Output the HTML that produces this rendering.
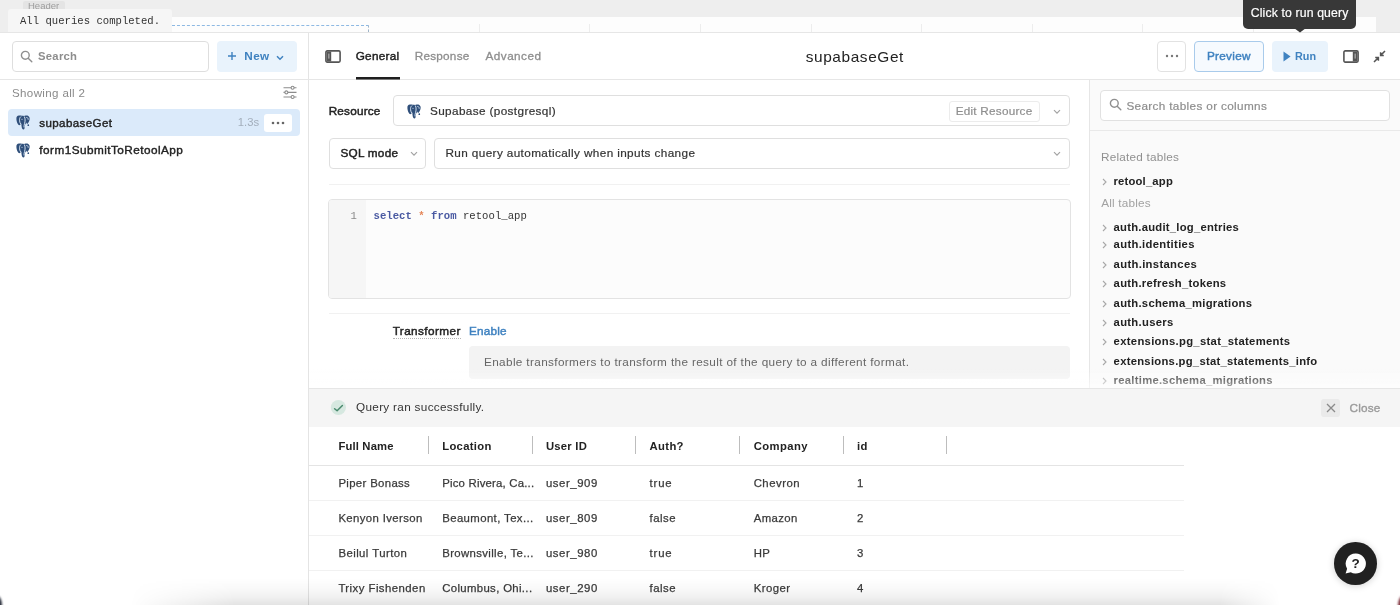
<!DOCTYPE html>
<html lang="en">
<head>
<meta charset="utf-8">
<title>supabaseGet - Query editor</title>
<style>
*{box-sizing:border-box;margin:0;padding:0}
html,body{width:1400px;height:605px;overflow:hidden;background:#fff}
body{font-family:"Liberation Sans",Arial,sans-serif;font-size:12px;color:#2b2b2b;position:relative}
#app{position:absolute;left:0;top:0;width:1400px;height:605px;overflow:hidden;background:transparent;will-change:transform}
.a{position:absolute}
.t{position:absolute;white-space:nowrap;line-height:16px;height:16px}
.mono{font-family:"Liberation Mono","DejaVu Sans Mono",monospace}
.g{color:#8c8c8c}
.b{font-weight:bold}
.blue{color:#3f82c0}
.box{position:absolute;border:1px solid #e2e2e2;border-radius:4px;background:#fff}
.hl{position:absolute;height:1px;background:#e6e6e6}
.vl{position:absolute;width:1px;background:#e6e6e6}
</style>
</head>
<body>
<div id="app">

<!-- ===== top canvas strip ===== -->
<div class="a" id="topgray" style="left:0;top:0;width:1400px;height:33px;background:#eeeeee"></div>
<div class="a" id="topwhite" style="left:8px;top:17px;width:1368px;height:15px;background:#fdfdfd"></div>
<div class="a" id="hdrtag" style="left:23px;top:1px;width:42px;height:10px;background:#e4e4e4;border-radius:2px"></div>
<div class="a" style="left:23px;top:3px;width:42px;height:8px;overflow:hidden"><div class="t g" id="hdrtxt" style="left:5px;top:-3px;font-size:9.500px;line-height:12px;height:12px;color:#9d9d9d">Header</div></div>
<div class="a" id="qtab" style="left:8px;top:9px;width:164px;height:23px;background:#f6f6f6;border-radius:3px 3px 0 0"></div>
<div class="t mono" id="qtabtxt" style="left:20.0px;top:13px;font-size:10.6px;color:#333;letter-spacing:0.01px">All queries completed.</div>
<div class="a" id="dash" style="left:172px;top:25px;width:197px;height:7px;border-top:1px dashed #8db9e3;border-right:1px dashed #9fb4c8"></div>
<div class="vl" style="left:479px;top:24px;height:8px;background:#ededed"></div><div class="vl" style="left:589px;top:24px;height:8px;background:#ededed"></div><div class="vl" style="left:700px;top:24px;height:8px;background:#ededed"></div><div class="vl" style="left:811px;top:24px;height:8px;background:#ededed"></div><div class="vl" style="left:921px;top:24px;height:8px;background:#ededed"></div><div class="vl" style="left:1032px;top:24px;height:8px;background:#ededed"></div><div class="vl" style="left:1142px;top:24px;height:8px;background:#ededed"></div><div class="vl" style="left:1253px;top:24px;height:8px;background:#ededed"></div>
<div class="hl" style="left:0;top:32px;width:1400px;background:#e6e6e6"></div>

<!-- ===== left panel ===== -->
<div class="vl" style="left:308px;top:33px;height:572px;background:#e4e4e4"></div>
<div class="hl" style="left:0;top:79px;width:1400px"></div>


<!-- ===== center header ===== -->
<svg class="a" id="sideico" style="left:325px;top:50px" width="16" height="13" viewBox="0 0 16 13"><rect x="0.9" y="0.9" width="14.2" height="11.2" rx="1.3" fill="#fff" stroke="#555" stroke-width="1.6"/><rect x="1.6" y="1.6" width="4.6" height="9.8" fill="#555"/><rect x="3" y="3.6" width="1.6" height="5" fill="#999"/></svg>
<div class="t" id="tgen" style="left:355.7px;top:48px;font-size:11.75px;color:#1f1f1f;-webkit-text-stroke:.45px #1f1f1f;letter-spacing:0.28px">General</div>
<div class="t" id="tres" style="left:414.7px;top:48px;font-size:11.75px;color:#8e8e8e;-webkit-text-stroke:.3px #8e8e8e;letter-spacing:0.24px">Response</div>
<div class="t" id="tadv" style="left:485.5px;top:48px;font-size:11.75px;color:#8e8e8e;-webkit-text-stroke:.3px #8e8e8e;letter-spacing:0.46px">Advanced</div>
<div class="a" style="left:356px;top:77px;width:44px;height:3px;background:linear-gradient(#1f1f1f 0,#1f1f1f 2px,#7a7a7a 2px)"></div>
<div class="t" id="title" style="left:805.7px;top:46px;font-size:15.42px;line-height:22px;height:22px;color:#222;letter-spacing:0.60px">supabaseGet</div>

<div class="box" style="left:1157px;top:41px;width:29px;height:31px"></div>
<svg class="a" style="left:1165px;top:54px" width="14" height="4" viewBox="0 0 14 4" fill="#777"><circle cx="2" cy="2" r="1.2"/><circle cx="7" cy="2" r="1.2"/><circle cx="12" cy="2" r="1.2"/></svg>
<div class="box" style="left:1194px;top:41px;width:70px;height:31px;border-color:#a9cbeb;background:#f6fafe"></div>
<div class="t blue" id="prev" style="left:1207.0px;top:48px;font-size:11.75px;-webkit-text-stroke:.45px #3f82c0;letter-spacing:0.28px">Preview</div>
<div class="a" style="left:1272px;top:41px;width:56px;height:31px;border-radius:4px;background:#e9f3fc"></div>
<svg class="a" style="left:1283px;top:51px" width="8" height="11" viewBox="0 0 8 11" fill="#3f82c0"><path d="M0.5 0.6L7.6 5.5L0.5 10.4z"/></svg>
<div class="t blue b" id="runt" style="left:1295.0px;top:48px;font-size:10.81px;">Run</div>
<svg class="a" id="panico" style="left:1343px;top:50px" width="16" height="13" viewBox="0 0 16 13"><rect x="0.9" y="0.9" width="14.2" height="11.2" rx="1.3" fill="#fff" stroke="#555" stroke-width="1.6"/><rect x="9.8" y="1.6" width="4.6" height="9.8" fill="#555"/><rect x="11.4" y="3.6" width="1.6" height="5" fill="#999"/></svg>
<svg class="a" id="colico" style="left:1373px;top:50px" width="13" height="13" viewBox="0 0 13 13" fill="none" stroke="#555" stroke-width="1.5"><path d="M12 1L7.6 5.4M7.6 2.2v3.2h3.2M1 12l4.4-4.4M5.4 10.8V7.6H2.2"/></svg>

<!-- tooltip -->
<div class="a" style="left:1243px;top:-4px;width:113px;height:33px;border-radius:5px;background:#383838"></div>
<svg class="a" style="left:1294px;top:28px" width="12" height="5" viewBox="0 0 12 5" fill="#383838"><path d="M0 0h12L6 4.6z"/></svg>
<div class="t" id="tip" style="left:1250.7px;top:5px;font-size:12.22px;color:#fff;-webkit-text-stroke:.2px #fff;letter-spacing:0.15px">Click to run query</div>


<!-- ===== center body ===== -->
<div class="t" id="reslab" style="left:328.7px;top:103px;font-size:11.75px;color:#222;-webkit-text-stroke:.45px #222;letter-spacing:0.20px">Resource</div>
<div class="box" style="left:393px;top:95px;width:677px;height:31px;border-color:#dfdfdf"></div>
<svg class="a" style="left:407px;top:104px" width="14" height="15" viewBox="0 0 14 15"><path fill="#2f4f7a" d="M3 .6C1.200.6.200 2 .4 4.200c.2 2.200 1 4.400 2 5.600.6.700 1.500.6 2.100-.2l.8-1c.1 1.900.3 4 1 5.200.6 1 1.900.900 2.200-.3L9 9.800c.5-.8 1-1.800 1.200-2.400.4 1.200 1 1.800 1.700 1.200 1.500-2.200 2.100-4.400 1.600-6C13 1 11.400.4 9.800.6 9 .7 8.400.9 8 1.100 7.300.8 6.400.7 5.700.8 4.900.5 3.800.5 3 .6z"/><circle cx="12.300" cy="10.200" r=".85" fill="#2f4f7a"/><path d="M4.700 1.800C3.600 2.600 3.400 4.200 3.600 5.800c.2 1.500.6 2.600 1 3.200M8.500 1.900c.9 1.600.7 4.500.1 6.500-.4 1.200-.6 2.600-.6 3.600" stroke="#dce9f7" stroke-width=".95" fill="none" stroke-linecap="round"/><path d="M10.600 2.400c1.100 0 1.700.8 1.600 2" stroke="#dce9f7" stroke-width=".8" fill="none" stroke-linecap="round"/><circle cx="6" cy="4.300" r=".55" fill="#dce9f7"/></svg>
<div class="t" id="supa" style="left:430.0px;top:103px;font-size:11.75px;color:#333;-webkit-text-stroke:.2px #333;letter-spacing:0.37px">Supabase (postgresql)</div>
<div class="a" style="left:949px;top:101px;width:91px;height:21px;border:1px solid #ececec;border-radius:3px;background:#fff"></div>
<div class="t" id="editres" style="left:955.7px;top:103px;font-size:11.75px;color:#8e8e8e;-webkit-text-stroke:.2px #8e8e8e;letter-spacing:0.23px">Edit Resource</div>
<svg class="a" style="left:1053px;top:109px" width="8" height="6" viewBox="0 0 8 6" stroke="#a3a3a3" stroke-width="1.2" fill="none"><path d="M1 1.200L4 4.200L7 1.200"/></svg>

<div class="box" style="left:329px;top:138px;width:97px;height:31px;border-color:#dfdfdf"></div>
<div class="t" id="sqlm" style="left:340.4px;top:145px;font-size:11.75px;color:#222;-webkit-text-stroke:.45px #222;letter-spacing:0.27px">SQL mode</div>
<svg class="a" style="left:410px;top:151px" width="8" height="6" viewBox="0 0 8 6" stroke="#a3a3a3" stroke-width="1.2" fill="none"><path d="M1 1.200L4 4.200L7 1.200"/></svg>
<div class="box" style="left:434px;top:138px;width:636px;height:31px;border-color:#dfdfdf"></div>
<div class="t" id="runq" style="left:445.5px;top:145px;font-size:11.75px;color:#333;-webkit-text-stroke:.2px #333;letter-spacing:0.38px">Run query automatically when inputs change</div>
<svg class="a" style="left:1053px;top:151px" width="8" height="6" viewBox="0 0 8 6" stroke="#a3a3a3" stroke-width="1.2" fill="none"><path d="M1 1.200L4 4.200L7 1.200"/></svg>

<div class="hl" style="left:329px;top:184px;width:741px;background:#f1f1f1"></div>

<!-- code editor -->
<div class="a" style="left:328px;top:199px;width:743px;height:100px;border:1px solid #e3e3e3;border-radius:4px;background:#fcfcfc;overflow:hidden"><div class="a" style="left:0;top:0;width:37px;height:100px;background:#f6f6f6"></div></div>
<div class="t mono" id="ln1" style="left:350.5px;top:208px;font-size:10.6px;color:#8a8a8a">1</div>
<div class="t mono" id="code" style="left:373.5px;top:208px;font-size:10.6px;color:#333;letter-spacing:0.03px"><span style="color:#4a5aa2;font-weight:bold">select</span> <span style="color:#e5875a;font-weight:bold">*</span> <span style="color:#4a5aa2;font-weight:bold">from</span> retool_app</div>

<div class="hl" style="left:329px;top:313px;width:741px;background:#f1f1f1"></div>
<div class="t" id="transf" style="left:392.7px;top:323px;font-size:11.75px;color:#222;-webkit-text-stroke:.45px #222;letter-spacing:0.41px">Transformer</div>
<div class="a" style="left:393px;top:338px;width:68px;height:1px;border-top:1px dotted #b5b5b5"></div>
<div class="t blue" id="enab" style="left:468.9px;top:323px;font-size:11.75px;-webkit-text-stroke:.45px #3f82c0;letter-spacing:0.22px">Enable</div>
<div class="a" style="left:469px;top:346px;width:601px;height:33px;border-radius:4px;background:#f3f3f3"></div>
<div class="t" id="entr" style="left:484.0px;top:354px;font-size:11.75px;color:#666;letter-spacing:0.36px">Enable transformers to transform the result of the query to a different format.</div>


<!-- ===== right schema panel ===== -->
<div class="a" style="left:1089px;top:80px;width:311px;height:308px;background:#fafafa;border-left:1px solid #e6e6e6"></div>
<div class="box" style="left:1100px;top:90px;width:290px;height:31px;border-color:#e1e1e1"></div>
<svg class="a" style="left:1109px;top:98px" width="13" height="13" viewBox="0 0 13 13" fill="none" stroke="#8f8f8f" stroke-width="1.400"><circle cx="5.300" cy="5.300" r="3.900"/><path d="M8.200 8.200L11.800 11.800" stroke-linecap="round"/></svg>
<div class="t" id="srt" style="left:1126.4px;top:98px;font-size:11.75px;color:#8e8e8e;-webkit-text-stroke:.2px #8e8e8e;letter-spacing:0.34px">Search tables or columns</div>
<div class="hl" style="left:1090px;top:130px;width:310px;background:#e9e9e9"></div>
<div class="t" id="relt" style="left:1101.0px;top:149px;font-size:11.75px;color:#909090;letter-spacing:0.22px">Related tables</div>
<div class="t" id="allt" style="left:1101.2px;top:195px;font-size:11.75px;color:#a2a2a2;letter-spacing:0.19px">All tables</div>
<svg class="a" style="left:1102px;top:177.5px" width="5" height="8" viewBox="0 0 5 8" fill="none" stroke="#a8a8a8" stroke-width="1.100"><path d="M1 1l3 3-3 3"/></svg>
<div class="t b" id="tb0" style="left:1113.4px;top:172.5px;font-size:11.28px;color:#222;letter-spacing:0.20px">retool_app</div>
<svg class="a" style="left:1102px;top:224.1px" width="5" height="8" viewBox="0 0 5 8" fill="none" stroke="#a8a8a8" stroke-width="1.100"><path d="M1 1l3 3-3 3"/></svg>
<div class="t b" id="tb1" style="left:1113.6px;top:219.1px;font-size:11.28px;color:#222;letter-spacing:0.24px">auth.audit_log_entries</div>
<svg class="a" style="left:1102px;top:241.4px" width="5" height="8" viewBox="0 0 5 8" fill="none" stroke="#a8a8a8" stroke-width="1.100"><path d="M1 1l3 3-3 3"/></svg>
<div class="t b" id="tb2" style="left:1113.6px;top:236.4px;font-size:11.28px;color:#222;letter-spacing:0.32px">auth.identities</div>
<svg class="a" style="left:1102px;top:260.8px" width="5" height="8" viewBox="0 0 5 8" fill="none" stroke="#a8a8a8" stroke-width="1.100"><path d="M1 1l3 3-3 3"/></svg>
<div class="t b" id="tb3" style="left:1113.6px;top:255.8px;font-size:11.28px;color:#222;letter-spacing:0.33px">auth.instances</div>
<svg class="a" style="left:1102px;top:280.2px" width="5" height="8" viewBox="0 0 5 8" fill="none" stroke="#a8a8a8" stroke-width="1.100"><path d="M1 1l3 3-3 3"/></svg>
<div class="t b" id="tb4" style="left:1113.6px;top:275.2px;font-size:11.28px;color:#222;letter-spacing:0.27px">auth.refresh_tokens</div>
<svg class="a" style="left:1102px;top:299.6px" width="5" height="8" viewBox="0 0 5 8" fill="none" stroke="#a8a8a8" stroke-width="1.100"><path d="M1 1l3 3-3 3"/></svg>
<div class="t b" id="tb5" style="left:1113.6px;top:294.6px;font-size:11.28px;color:#222;letter-spacing:0.27px">auth.schema_migrations</div>
<svg class="a" style="left:1102px;top:319.0px" width="5" height="8" viewBox="0 0 5 8" fill="none" stroke="#a8a8a8" stroke-width="1.100"><path d="M1 1l3 3-3 3"/></svg>
<div class="t b" id="tb6" style="left:1113.6px;top:314.0px;font-size:11.28px;color:#222;letter-spacing:0.29px">auth.users</div>
<svg class="a" style="left:1102px;top:338.4px" width="5" height="8" viewBox="0 0 5 8" fill="none" stroke="#a8a8a8" stroke-width="1.100"><path d="M1 1l3 3-3 3"/></svg>
<div class="t b" id="tb7" style="left:1113.6px;top:333.4px;font-size:11.28px;color:#222;letter-spacing:0.31px">extensions.pg_stat_statements</div>
<svg class="a" style="left:1102px;top:357.8px" width="5" height="8" viewBox="0 0 5 8" fill="none" stroke="#a8a8a8" stroke-width="1.100"><path d="M1 1l3 3-3 3"/></svg>
<div class="t b" id="tb8" style="left:1113.6px;top:352.8px;font-size:11.28px;color:#222;letter-spacing:0.27px">extensions.pg_stat_statements_info</div>
<svg class="a" style="left:1102px;top:377.2px" width="5" height="8" viewBox="0 0 5 8" fill="none" stroke="#a8a8a8" stroke-width="1.100"><path d="M1 1l3 3-3 3"/></svg>
<div class="t b" id="tb9" style="left:1113.6px;top:372.2px;font-size:11.28px;color:#222;letter-spacing:0.27px">realtime.schema_migrations</div>

<!-- ===== bottom results panel ===== -->
<div class="a" style="left:309px;top:388px;width:1091px;height:217px;background:#fff"></div>
<div class="a" style="left:309px;top:388px;width:1091px;height:39px;background:#f5f5f5;border-top:1px solid #e6e6e6"></div>
<svg class="a" style="left:330px;top:399px" width="17" height="17" viewBox="0 0 17 17"><circle cx="8.400" cy="8.500" r="7.600" fill="#d6e8e0"/><path d="M4.600 9.700l2.500 2.100 5.300-5.300" fill="none" stroke="#4a8a6e" stroke-width="1.500" stroke-linecap="round" stroke-linejoin="round"/></svg>
<div class="t" id="qrs" style="left:356.0px;top:399px;font-size:11.75px;color:#333;letter-spacing:0.31px">Query ran successfully.</div>
<div class="a" style="left:1321px;top:399px;width:19px;height:18px;border-radius:3px;background:#eaeaea"></div>
<svg class="a" style="left:1326px;top:403px" width="10" height="10" viewBox="0 0 10 10" stroke="#8a8a8a" stroke-width="1.300" fill="none"><path d="M1 1l8 8M9 1L1 9"/></svg>
<div class="t" id="closet" style="left:1349.5px;top:400px;font-size:11.75px;color:#9a9a9a;-webkit-text-stroke:.35px #9a9a9a;letter-spacing:0.21px">Close</div>
<div class="t b" id="th0" style="left:338.4px;top:438px;font-size:11.28px;color:#222;letter-spacing:0.16px">Full Name</div>
<div class="t b" id="th1" style="left:442.2px;top:438px;font-size:11.28px;color:#222;letter-spacing:0.31px">Location</div>
<div class="t b" id="th2" style="left:546.0px;top:438px;font-size:11.28px;color:#222;letter-spacing:0.22px">User ID</div>
<div class="t b" id="th3" style="left:649.6px;top:438px;font-size:11.28px;color:#222;letter-spacing:0.34px">Auth?</div>
<div class="t b" id="th4" style="left:753.7px;top:438px;font-size:11.28px;color:#222;letter-spacing:0.41px">Company</div>
<div class="t b" id="th5" style="left:857px;top:438px;font-size:11.28px;letter-spacing:.3px;color:#222">id</div>
<div class="vl" style="left:428px;top:436px;height:18px;background:#bdbdbd"></div>
<div class="vl" style="left:531.5px;top:436px;height:18px;background:#bdbdbd"></div>
<div class="vl" style="left:635px;top:436px;height:18px;background:#bdbdbd"></div>
<div class="vl" style="left:739px;top:436px;height:18px;background:#bdbdbd"></div>
<div class="vl" style="left:842.5px;top:436px;height:18px;background:#bdbdbd"></div>
<div class="vl" style="left:946px;top:436px;height:18px;background:#bdbdbd"></div>
<div class="hl" style="left:309px;top:465px;width:875px;background:#e4e4e4"></div>
<div class="t" id="c00" style="left:338.4px;top:474.5px;font-size:11.37px;color:#3a3a3a;-webkit-text-stroke:.25px #3a3a3a;letter-spacing:0.35px">Piper Bonass</div>
<div class="t" id="c01" style="left:442.2px;top:474.5px;font-size:11.37px;color:#3a3a3a;-webkit-text-stroke:.25px #3a3a3a;letter-spacing:0.21px">Pico Rivera, Ca...</div>
<div class="t" id="c02" style="left:546.0px;top:474.5px;font-size:11.37px;color:#3a3a3a;-webkit-text-stroke:.25px #3a3a3a;letter-spacing:0.55px">user_909</div>
<div class="t" id="c03" style="left:649.6px;top:474.5px;font-size:11.37px;color:#3a3a3a;-webkit-text-stroke:.25px #3a3a3a;letter-spacing:0.80px">true</div>
<div class="t" id="c04" style="left:753.7px;top:474.5px;font-size:11.37px;color:#3a3a3a;-webkit-text-stroke:.25px #3a3a3a;letter-spacing:0.48px">Chevron</div>
<div class="t" id="c05" style="left:857px;top:474.5px;font-size:11.37px;letter-spacing:.35px;color:#3a3a3a;-webkit-text-stroke:.25px #3a3a3a">1</div>
<div class="hl" style="left:309px;top:500px;width:875px;background:#f1f1f1"></div>
<div class="t" id="c10" style="left:338.4px;top:509.5px;font-size:11.37px;color:#3a3a3a;-webkit-text-stroke:.25px #3a3a3a;letter-spacing:0.38px">Kenyon Iverson</div>
<div class="t" id="c11" style="left:442.2px;top:509.5px;font-size:11.37px;color:#3a3a3a;-webkit-text-stroke:.25px #3a3a3a;letter-spacing:0.40px">Beaumont, Tex...</div>
<div class="t" id="c12" style="left:546.0px;top:509.5px;font-size:11.37px;color:#3a3a3a;-webkit-text-stroke:.25px #3a3a3a;letter-spacing:0.55px">user_809</div>
<div class="t" id="c13" style="left:649.6px;top:509.5px;font-size:11.37px;color:#3a3a3a;-webkit-text-stroke:.25px #3a3a3a;letter-spacing:0.47px">false</div>
<div class="t" id="c14" style="left:753.7px;top:509.5px;font-size:11.37px;color:#3a3a3a;-webkit-text-stroke:.25px #3a3a3a;letter-spacing:0.40px">Amazon</div>
<div class="t" id="c15" style="left:857px;top:509.5px;font-size:11.37px;letter-spacing:.35px;color:#3a3a3a;-webkit-text-stroke:.25px #3a3a3a">2</div>
<div class="hl" style="left:309px;top:535px;width:875px;background:#f1f1f1"></div>
<div class="t" id="c20" style="left:338.4px;top:544.5px;font-size:11.37px;color:#3a3a3a;-webkit-text-stroke:.25px #3a3a3a;letter-spacing:0.44px">Beilul Turton</div>
<div class="t" id="c21" style="left:442.2px;top:544.5px;font-size:11.37px;color:#3a3a3a;-webkit-text-stroke:.25px #3a3a3a;letter-spacing:0.37px">Brownsville, Te...</div>
<div class="t" id="c22" style="left:546.0px;top:544.5px;font-size:11.37px;color:#3a3a3a;-webkit-text-stroke:.25px #3a3a3a;letter-spacing:0.55px">user_980</div>
<div class="t" id="c23" style="left:649.6px;top:544.5px;font-size:11.37px;color:#3a3a3a;-webkit-text-stroke:.25px #3a3a3a;letter-spacing:0.80px">true</div>
<div class="t" id="c24" style="left:753.7px;top:544.5px;font-size:11.37px;letter-spacing:.35px;color:#3a3a3a;-webkit-text-stroke:.25px #3a3a3a">HP</div>
<div class="t" id="c25" style="left:857px;top:544.5px;font-size:11.37px;letter-spacing:.35px;color:#3a3a3a;-webkit-text-stroke:.25px #3a3a3a">3</div>
<div class="hl" style="left:309px;top:570px;width:875px;background:#f1f1f1"></div>
<div class="t" id="c30" style="left:338.4px;top:579.5px;font-size:11.37px;color:#3a3a3a;-webkit-text-stroke:.25px #3a3a3a;letter-spacing:0.46px">Trixy Fishenden</div>
<div class="t" id="c31" style="left:442.2px;top:579.5px;font-size:11.37px;color:#3a3a3a;-webkit-text-stroke:.25px #3a3a3a;letter-spacing:0.35px">Columbus, Ohi...</div>
<div class="t" id="c32" style="left:546.0px;top:579.5px;font-size:11.37px;color:#3a3a3a;-webkit-text-stroke:.25px #3a3a3a;letter-spacing:0.55px">user_290</div>
<div class="t" id="c33" style="left:649.6px;top:579.5px;font-size:11.37px;color:#3a3a3a;-webkit-text-stroke:.25px #3a3a3a;letter-spacing:0.47px">false</div>
<div class="t" id="c34" style="left:753.7px;top:579.5px;font-size:11.37px;color:#3a3a3a;-webkit-text-stroke:.25px #3a3a3a;letter-spacing:0.44px">Kroger</div>
<div class="t" id="c35" style="left:857px;top:579.5px;font-size:11.37px;letter-spacing:.35px;color:#3a3a3a;-webkit-text-stroke:.25px #3a3a3a">4</div>

<!-- help bubble -->
<div class="a" style="left:1334px;top:542px;width:42.500px;height:42.500px;border-radius:50%;background:#212121;box-shadow:0 1px 7px rgba(0,0,0,.18)"></div>
<svg class="a" style="left:1344px;top:552px" width="23" height="23" viewBox="0 0 23 23"><path d="M11.700 1.600a10 10 0 0 0-8.600 15.100L1.600 21.600l5.200-1.400A10 10 0 1 0 11.700 1.600z" fill="#fff"/></svg>
<div class="t b" id="qm" style="left:1351.500px;top:555.500px;font-size:13.500px;color:#212121">?</div>

<!-- window shadows / corners -->
<div class="a" style="left:130px;top:578px;width:1150px;height:27px;background:linear-gradient(to bottom,rgba(0,0,0,0) 0,rgba(0,0,0,.022) 40%,rgba(0,0,0,.058) 72%,rgba(0,0,0,.108) 100%);-webkit-mask-image:linear-gradient(to right,transparent 0,#000 105px,#000 1090px,transparent 100%);mask-image:linear-gradient(to right,transparent 0,#000 105px,#000 1090px,transparent 100%)"></div>
<div class="a" style="left:-7px;top:596px;width:9px;height:20px;border-radius:50%;background:#1d2230;filter:blur(1px)"></div>
<div class="a" style="left:1398px;top:596px;width:9px;height:20px;border-radius:50%;background:#7a2a36;filter:blur(1px)"></div>
<div class="a" style="left:309px;top:368px;width:1091px;height:20px;background:linear-gradient(rgba(255,255,255,0),rgba(255,255,255,.62))"></div>

<!-- search -->
<div class="box" style="left:12px;top:41px;width:197px;height:31px;border-color:#dedede"></div>
<svg class="a" style="left:20px;top:50px" width="13" height="13" viewBox="0 0 13 13" fill="none" stroke="#8f8f8f" stroke-width="1.4"><circle cx="5.3" cy="5.3" r="3.9"/><path d="M8.2 8.2L11.8 11.8" stroke-linecap="round"/></svg>
<div class="t g b" id="srch" style="left:38.0px;top:48px;font-size:11.28px;color:#8e8e8e;letter-spacing:0.28px">Search</div>
<!-- new button -->
<div class="a" style="left:217px;top:41px;width:80px;height:31px;border-radius:4px;background:#e9f3fc"></div>
<svg class="a" style="left:227px;top:51px" width="10" height="10" viewBox="0 0 10 10" stroke="#3f82c0" stroke-width="1.4" fill="none"><path d="M5 1v8M1 5h8"/></svg>
<div class="t b blue" id="newt" style="left:244.3px;top:48px;font-size:11.75px;letter-spacing:0.37px">New</div>
<svg class="a" style="left:275.500px;top:55px" width="8" height="6" viewBox="0 0 8 6" stroke="#3f82c0" stroke-width="1.5" fill="none"><path d="M1 1.2L4 4.2L7 1.2"/></svg>

<div class="t g" id="showing" style="left:12.0px;top:85px;font-size:11.56px;color:#8a8a8a;letter-spacing:0.36px">Showing all 2</div>
<svg class="a" style="left:283px;top:85px" width="14" height="15" viewBox="0 0 14 15" stroke="#8c8c8c" stroke-width="1.100" fill="#fff"><path d="M0.500 2.700h13M0.500 7.400h13M0.500 12h13"/><circle cx="9.600" cy="2.700" r="1.500"/><circle cx="3.400" cy="7.400" r="1.500"/><circle cx="9.600" cy="12" r="1.500"/></svg>

<!-- query rows -->
<div class="a" style="left:8px;top:109px;width:292px;height:27px;border-radius:4px;background:#dbeafa"></div>
<svg class="a" style="left:16px;top:115px" width="14" height="15" viewBox="0 0 14 15"><path fill="#2f4f7a" d="M3 .6C1.200.6.200 2 .4 4.200c.2 2.200 1 4.400 2 5.600.6.700 1.500.6 2.100-.2l.8-1c.1 1.900.3 4 1 5.200.6 1 1.900.900 2.200-.3L9 9.800c.5-.8 1-1.800 1.200-2.400.4 1.200 1 1.800 1.700 1.200 1.500-2.200 2.100-4.400 1.600-6C13 1 11.400.4 9.800.6 9 .7 8.400.9 8 1.100 7.300.8 6.400.7 5.700.8 4.900.5 3.800.5 3 .6z"/><circle cx="12.300" cy="10.200" r=".85" fill="#2f4f7a"/><path d="M4.700 1.800C3.600 2.600 3.400 4.200 3.600 5.800c.2 1.500.6 2.600 1 3.200M8.500 1.900c.9 1.600.7 4.500.1 6.500-.4 1.200-.6 2.600-.6 3.600" stroke="#dce9f7" stroke-width=".95" fill="none" stroke-linecap="round"/><path d="M10.600 2.400c1.100 0 1.700.8 1.600 2" stroke="#dce9f7" stroke-width=".8" fill="none" stroke-linecap="round"/><circle cx="6" cy="4.300" r=".55" fill="#dce9f7"/></svg>
<div class="t" id="q1" style="left:39.3px;top:115px;font-size:11.56px;color:#222;-webkit-text-stroke:.4px #222;letter-spacing:0.40px">supabaseGet</div>
<div class="t" id="q1t" style="left:237.7px;top:114px;font-size:11.28px;color:#a3aebb;letter-spacing:0.07px">1.3s</div>
<div class="a" style="left:264px;top:114px;width:28px;height:18px;border-radius:3px;background:#fff"></div>
<svg class="a" style="left:271px;top:121px" width="14" height="4" viewBox="0 0 14 4" fill="#666"><circle cx="2" cy="2" r="1.3"/><circle cx="7" cy="2" r="1.3"/><circle cx="12" cy="2" r="1.3"/></svg>
<svg class="a" style="left:16px;top:143px" width="14" height="15" viewBox="0 0 14 15"><path fill="#2f4f7a" d="M3 .6C1.200.6.200 2 .4 4.200c.2 2.200 1 4.400 2 5.600.6.700 1.500.6 2.100-.2l.8-1c.1 1.900.3 4 1 5.200.6 1 1.900.900 2.200-.3L9 9.800c.5-.8 1-1.800 1.200-2.400.4 1.200 1 1.800 1.700 1.200 1.500-2.200 2.100-4.400 1.600-6C13 1 11.400.4 9.800.6 9 .7 8.400.9 8 1.100 7.300.8 6.400.7 5.700.8 4.900.5 3.800.5 3 .6z"/><circle cx="12.300" cy="10.200" r=".85" fill="#2f4f7a"/><path d="M4.700 1.800C3.600 2.600 3.400 4.200 3.600 5.800c.2 1.500.6 2.600 1 3.200M8.500 1.900c.9 1.600.7 4.500.1 6.500-.4 1.200-.6 2.600-.6 3.600" stroke="#dce9f7" stroke-width=".95" fill="none" stroke-linecap="round"/><path d="M10.600 2.400c1.100 0 1.700.8 1.600 2" stroke="#dce9f7" stroke-width=".8" fill="none" stroke-linecap="round"/><circle cx="6" cy="4.300" r=".55" fill="#dce9f7"/></svg>
<div class="t" id="q2" style="left:39.3px;top:142px;font-size:11.75px;color:#222;-webkit-text-stroke:.4px #222;letter-spacing:0.46px">form1SubmitToRetoolApp</div>

</div>
</body>
</html>
